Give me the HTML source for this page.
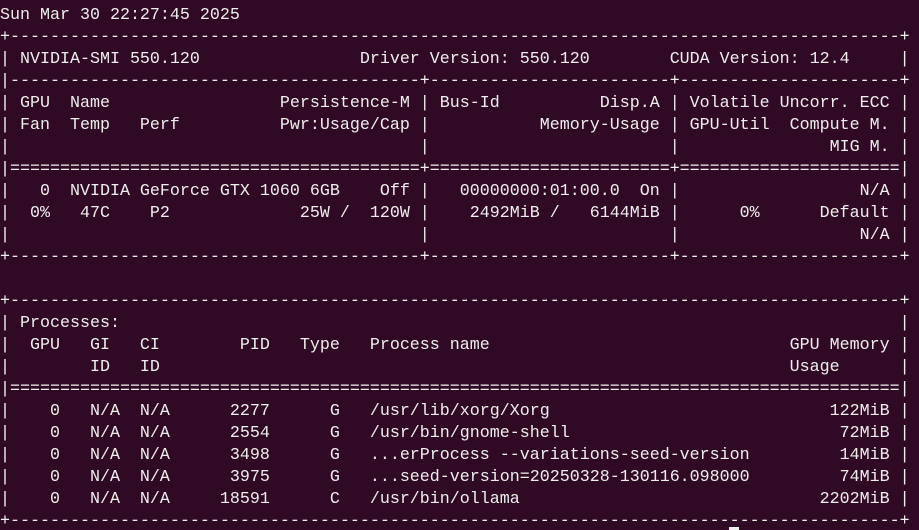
<!DOCTYPE html>
<html><head><meta charset="utf-8"><style>
html,body{margin:0;padding:0;background:#300a24;width:919px;height:530px;overflow:hidden;position:relative}
pre{margin:0;padding:5px 0 0 0;font-family:"Liberation Mono","DejaVu Sans Mono",monospace;font-size:16.67px;line-height:22px;color:#eeeeec;white-space:pre}
.cur{position:absolute;left:729px;top:527px;width:10px;height:3px;background:#eeeeec}
</style></head><body><pre>Sun Mar 30 22:27:45 2025
+-----------------------------------------------------------------------------------------+
| NVIDIA-SMI 550.120                Driver Version: 550.120        CUDA Version: 12.4     |
|-----------------------------------------+------------------------+----------------------+
| GPU  Name                 Persistence-M | Bus-Id          Disp.A | Volatile Uncorr. ECC |
| Fan  Temp   Perf          Pwr:Usage/Cap |           Memory-Usage | GPU-Util  Compute M. |
|                                         |                        |               MIG M. |
|=========================================+========================+======================|
|   0  NVIDIA GeForce GTX 1060 6GB    Off |   00000000:01:00.0  On |                  N/A |
|  0%   47C    P2             25W /  120W |    2492MiB /   6144MiB |      0%      Default |
|                                         |                        |                  N/A |
+-----------------------------------------+------------------------+----------------------+

+-----------------------------------------------------------------------------------------+
| Processes:                                                                              |
|  GPU   GI   CI        PID   Type   Process name                              GPU Memory |
|        ID   ID                                                               Usage      |
|=========================================================================================|
|    0   N/A  N/A      2277      G   /usr/lib/xorg/Xorg                            122MiB |
|    0   N/A  N/A      2554      G   /usr/bin/gnome-shell                           72MiB |
|    0   N/A  N/A      3498      G   ...erProcess --variations-seed-version         14MiB |
|    0   N/A  N/A      3975      G   ...seed-version=20250328-130116.098000         74MiB |
|    0   N/A  N/A     18591      C   /usr/bin/ollama                              2202MiB |
+-----------------------------------------------------------------------------------------+</pre><div class="cur"></div></body></html>
